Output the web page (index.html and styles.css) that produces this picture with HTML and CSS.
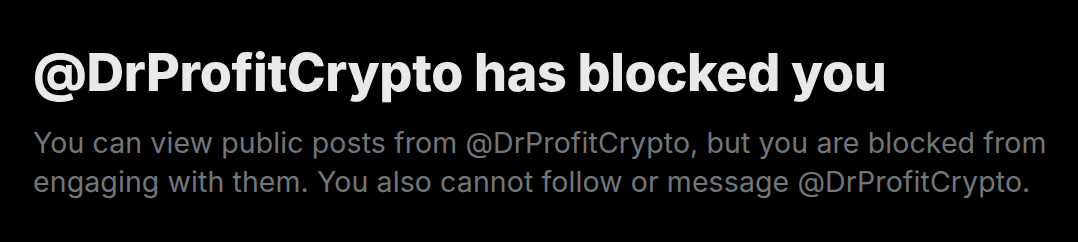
FILE: index.html
```html
<!DOCTYPE html>
<html>
<head>
<meta charset="utf-8">
<link rel="stylesheet" href="styles.css">
</head>
<body>
<div class="notice">
  <h1 class="title">@DrProfitCrypto has blocked you</h1>
  <p class="desc">You can view public posts from @DrProfitCrypto, but you are blocked from engaging with them. You also cannot follow or message @DrProfitCrypto.</p>
</div>
</body>
</html>
```
FILE: styles.css
```css
html, body {
  margin: 0;
  padding: 0;
  background: #000;
}
.notice {
  padding: 41px 20px 0 33px;
  font-family: Inter, "Noto Sans", sans-serif;
}
.title {
  margin: 0;
  color: #e7e9ea;
  font-size: 52px;
  font-weight: 800;
  line-height: 64px;
  letter-spacing: -0.35px;
}
.desc {
  margin: 18px 0 0;
  color: #71767b;
  font-size: 28.5px;
  font-weight: 400;
  line-height: 39px;
  letter-spacing: 0.1px;
}
```
